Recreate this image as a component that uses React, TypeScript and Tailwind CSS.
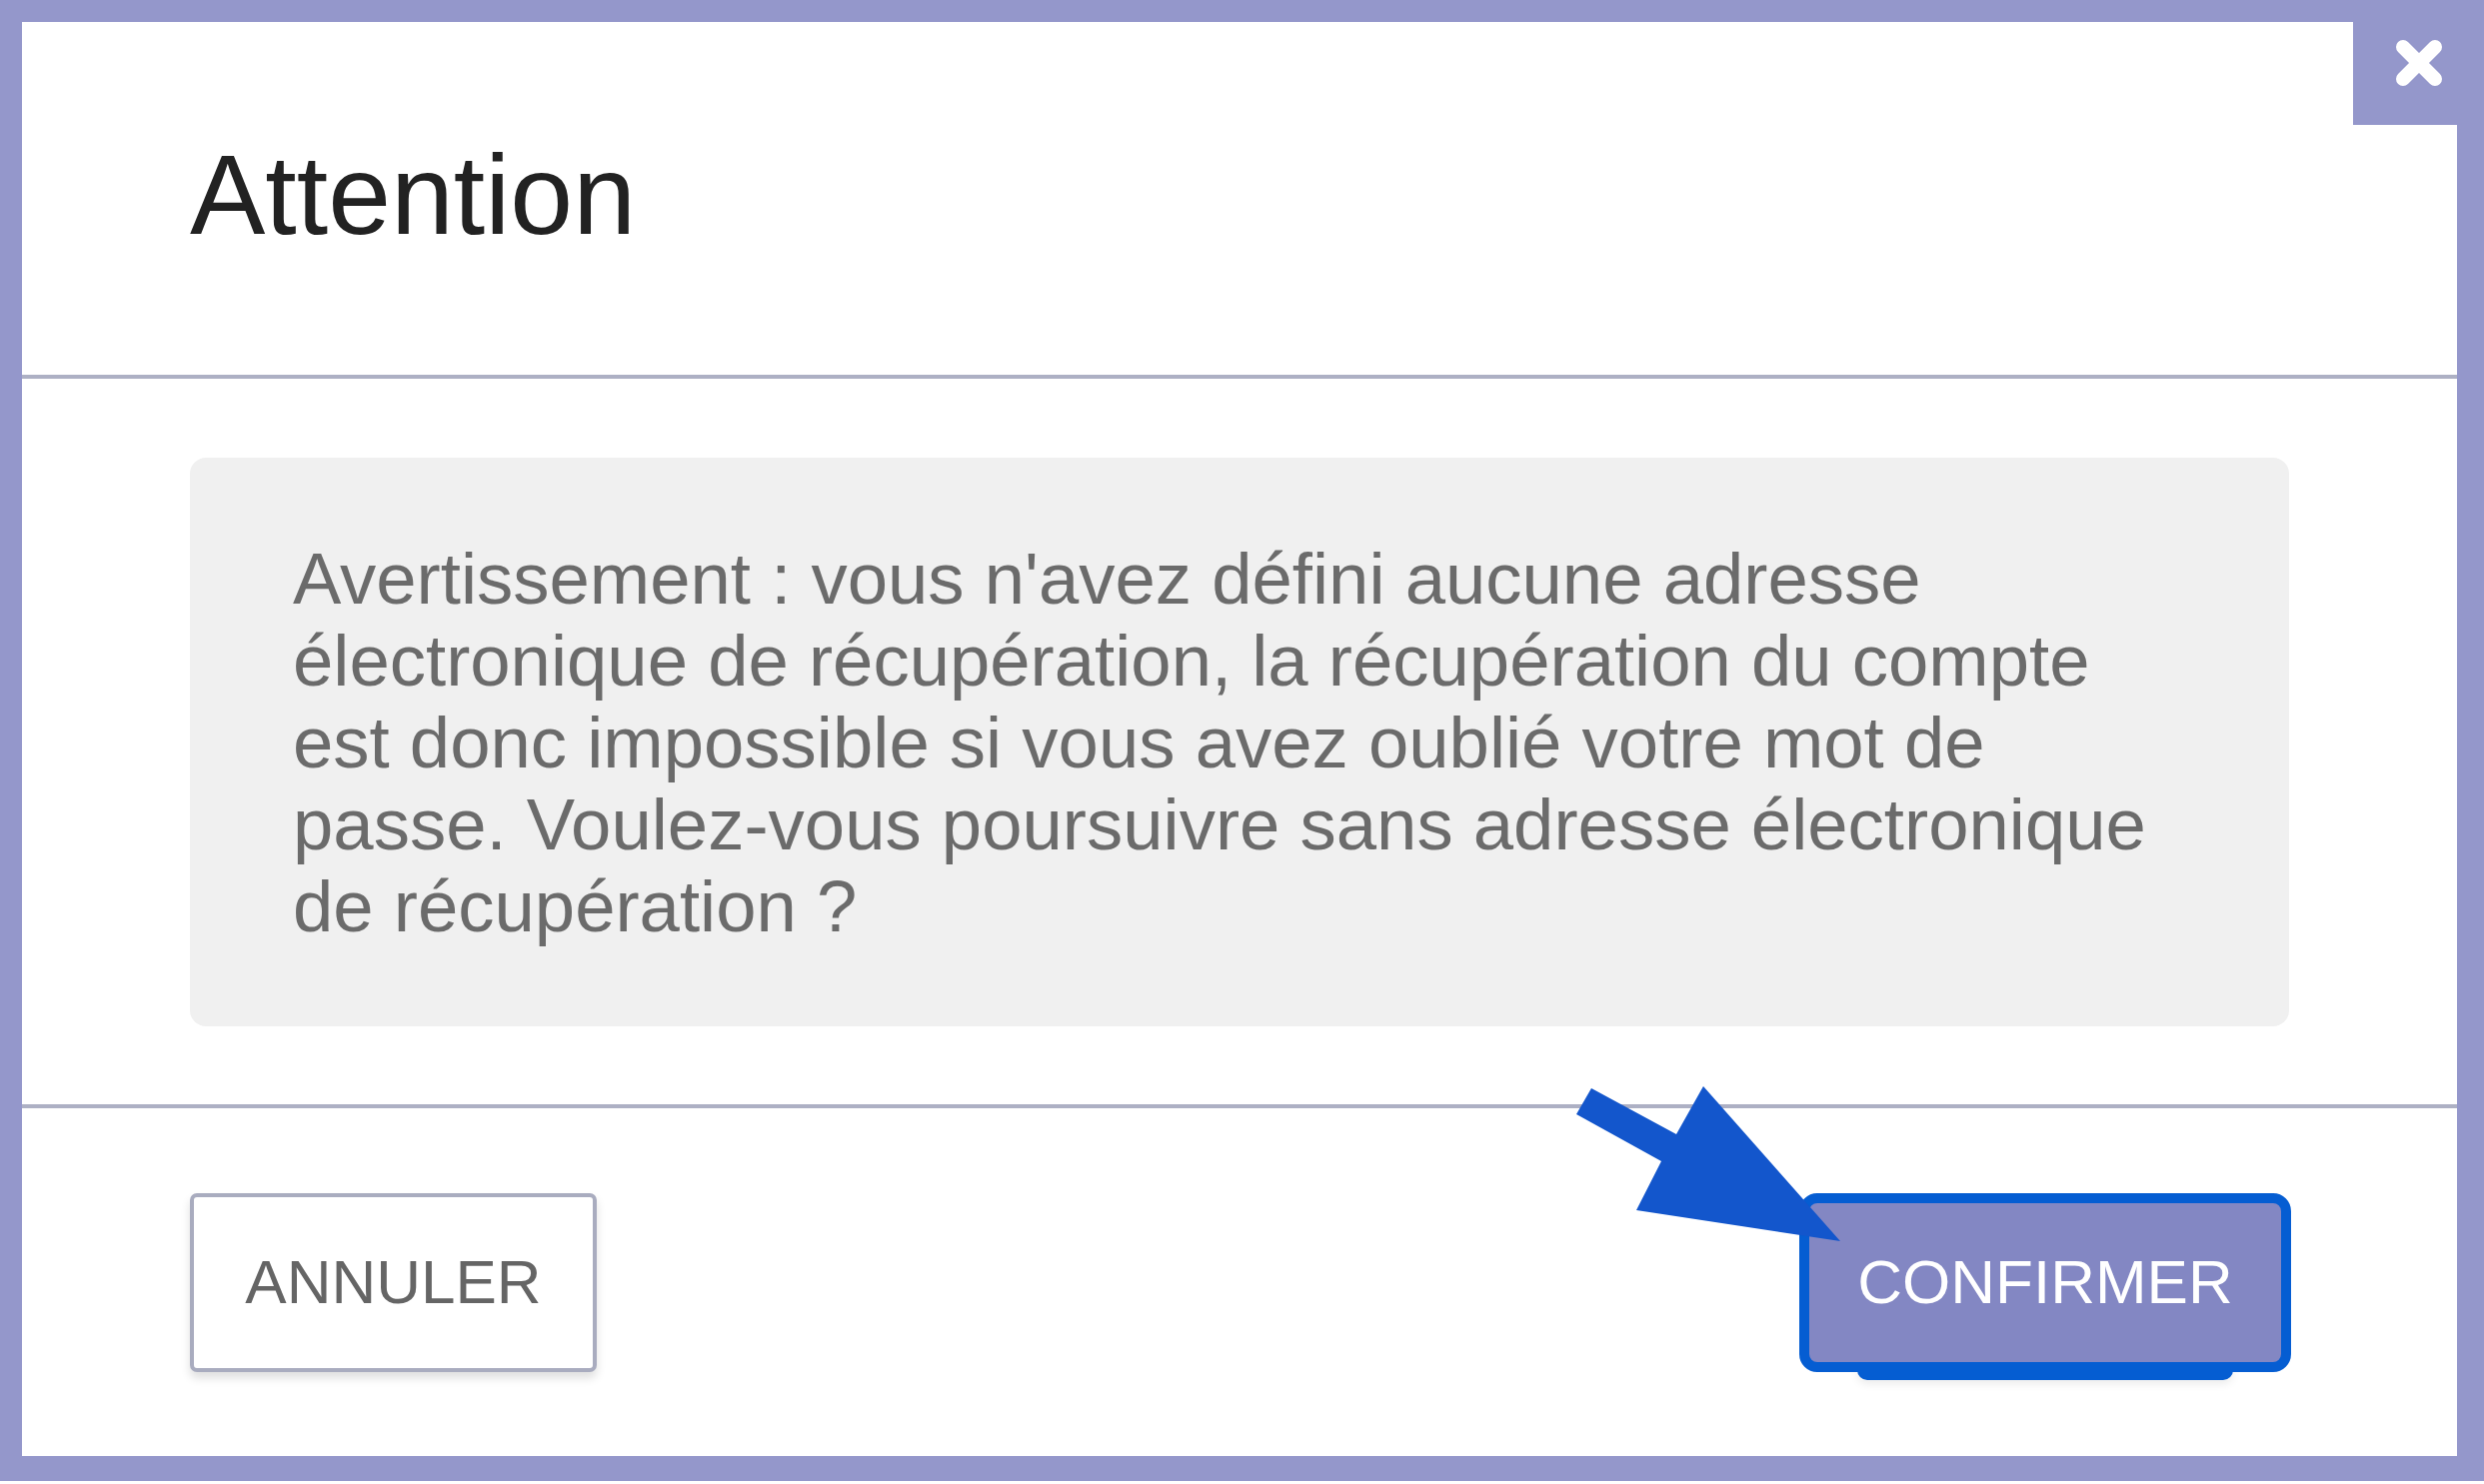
import React from "react";

const font = { fontFamily: '"Liberation Sans", Arial, Helvetica, sans-serif' };

export default function App() {
  return (
    <div className="relative w-[2485px] h-[1485px] bg-white overflow-hidden" style={font}>
      <div className="h-[1482px] bg-[#9497cb] pt-[22px] pl-[22px] pr-[27px] pb-[25px]">
        <div className="flex h-full w-full flex-col bg-white">
          {/* Header */}
          <div className="h-[353px] shrink-0 pl-[168px] pt-[117px]">
            <h1 className="text-[113px] leading-[112px] text-[#222222] font-normal">Attention</h1>
          </div>
          <div className="h-[4px] shrink-0 bg-[#adb0c4]" />
          {/* Body */}
          <div className="shrink-0 px-[168px] pt-[79px] pb-[78px]">
            <div className="h-[569px] rounded-[16px] bg-[#f0f0f0] pl-[103px] pr-[50px] pt-[80px]">
              <p className="text-[72.5px] leading-[82px] text-[#6b6b6b]">
                Avertissement : vous n'avez défini aucune adresse
                <br />
                électronique de récupération, la récupération du compte
                <br />
                est donc impossible si vous avez oublié votre mot de
                <br />
                passe. Voulez-vous poursuivre sans adresse électronique
                <br />
                de récupération ?
              </p>
            </div>
          </div>
          <div className="h-[4px] shrink-0 bg-[#adb0c4]" />
          {/* Footer */}
          <div className="flex flex-1 items-center justify-between pl-[168px] pr-[166px]">
            <button className="flex h-[179px] w-[407px] items-center justify-center rounded-[7px] border-[4px] border-[#a9acbf] bg-white text-[62px] leading-none text-[#656565] shadow-[0_6px_10px_rgba(0,0,0,0.13)]">
              ANNULER
            </button>
            <div className="relative">
              <button className="relative z-10 flex h-[179px] w-[492px] items-center justify-center rounded-[18px] border-[10px] border-[#055dd2] bg-[#8387c3] text-[62px] leading-none text-white">
                CONFIRMER
              </button>
              <div className="absolute bottom-[-8px] left-[58px] right-[58px] h-[14px] rounded-b-[10px] bg-[#055dd2] shadow-[0_4px_8px_rgba(0,0,0,0.08)]" />
            </div>
          </div>
        </div>
      </div>

      {/* Close button */}
      <div className="absolute right-0 top-0 flex h-[125px] w-[131px] items-center justify-center bg-[#9497cb]">
        <svg width="48" height="48" viewBox="0 0 48 48">
          <line x1="8" y1="8" x2="40" y2="40" stroke="white" strokeWidth="14" strokeLinecap="round" />
          <line x1="40" y1="8" x2="8" y2="40" stroke="white" strokeWidth="14" strokeLinecap="round" />
        </svg>
      </div>

      {/* Annotation arrow */}
      <svg className="pointer-events-none absolute left-0 top-0 z-20" width="2485" height="1485" viewBox="0 0 2485 1485">
        <polygon
          points="1592,1089 1677,1135 1704,1087 1841,1242 1637,1211 1662,1162 1577,1115"
          fill="#1356cc"
        />
      </svg>
    </div>
  );
}
